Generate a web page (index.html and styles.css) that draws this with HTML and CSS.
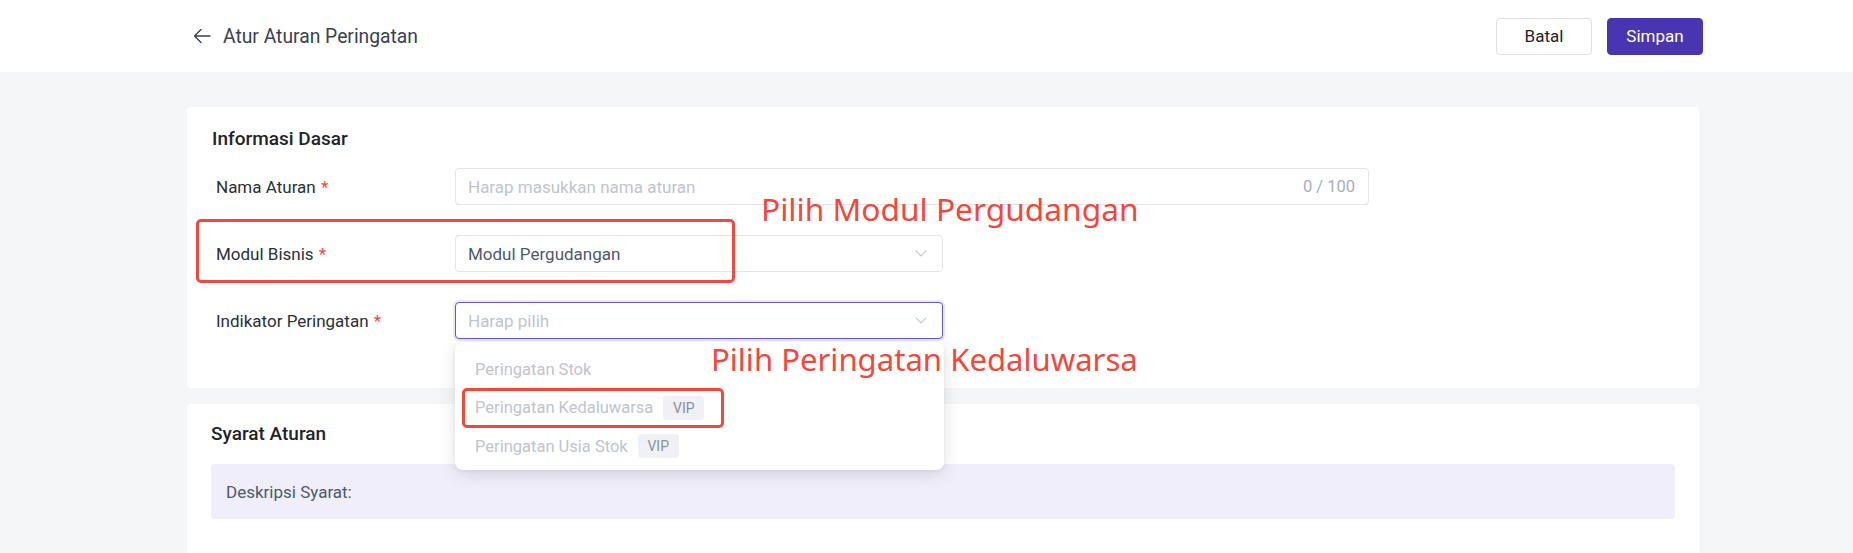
FILE: index.html
```html
<!DOCTYPE html>
<html lang="id">
<head>
<meta charset="utf-8">
<title>Atur Aturan Peringatan</title>
<link rel="stylesheet" href="styles.css">
</head>
<body>
<header class="topbar">
  <div class="topbar-left">
    <svg class="back-icon" width="18" height="18" viewBox="0 0 18 18"><path d="M17 9H1.5M8 2.5L1.5 9L8 15.5" fill="none" stroke="#3a4150" stroke-width="1.4" stroke-linecap="round" stroke-linejoin="round"/></svg>
    <span class="page-title">Atur Aturan Peringatan</span>
  </div>
  <div class="topbar-actions">
    <button class="btn btn-default">Batal</button>
    <button class="btn btn-primary">Simpan</button>
  </div>
</header>

<main class="content">
  <section class="card card-basic">
    <h2 class="card-title">Informasi Dasar</h2>
    <div class="form">
      <div class="form-row">
        <label class="form-label">Nama Aturan <span class="req">*</span></label>
        <div class="input input-wide">
          <span class="placeholder">Harap masukkan nama aturan</span>
          <span class="counter">0 / 100</span>
        </div>
      </div>
      <div class="form-row">
        <label class="form-label">Modul Bisnis <span class="req">*</span></label>
        <div class="input select">
          <span class="value">Modul Pergudangan</span>
          <svg class="chevron" width="12" height="7" viewBox="0 0 12 7"><path d="M0.7 0.7L6 6L11.3 0.7" fill="none" stroke="#c4c7cf" stroke-width="1.1"/></svg>
        </div>
      </div>
      <div class="form-row">
        <label class="form-label">Indikator Peringatan <span class="req">*</span></label>
        <div class="input select select-focus">
          <span class="placeholder">Harap pilih</span>
          <svg class="chevron" width="12" height="7" viewBox="0 0 12 7"><path d="M0.7 0.7L6 6L11.3 0.7" fill="none" stroke="#c4c7cf" stroke-width="1.1"/></svg>
          <ul class="dropdown">
            <li class="option">Peringatan Stok</li>
            <li class="option">Peringatan Kedaluwarsa <span class="vip">VIP</span><span class="mark mark-option"></span></li>
            <li class="option">Peringatan Usia Stok <span class="vip">VIP</span></li>
          </ul>
        </div>
      </div>
    </div>
    <span class="mark mark-module"></span>
    <span class="note note-module">Pilih Modul Pergudangan</span>
    <span class="note note-indicator">Pilih Peringatan Kedaluwarsa</span>
  </section>

  <section class="card card-rules">
    <h2 class="card-title">Syarat Aturan</h2>
    <div class="desc-box">Deskripsi Syarat:</div>
  </section>
</main>
</body>
</html>
```

FILE: styles.css
```css
* { box-sizing: border-box; }
html, body { margin: 0; padding: 0; }
body {
  background: #f5f6f8;
  font-family: Roboto, "Liberation Sans", Arial, sans-serif;
  color: #1f2329;
  height: 553px;
  overflow: hidden;
}

.topbar {
  height: 72px;
  background: #ffffff;
  display: flex;
  align-items: center;
  justify-content: space-between;
  padding: 0 150px 0 193px;
}
.topbar-left { display: flex; align-items: center; gap: 12px; }
.back-icon { display: block; margin-top: -1px; }
.page-title { font-size: 19.3px; color: #3a4150; }
.topbar-actions { display: flex; gap: 15px; }
.btn {
  width: 96px;
  height: 37px;
  border-radius: 4px;
  font-family: inherit;
  font-size: 17px;
  cursor: pointer;
}
.btn-default { background: #fff; border: 1px solid #dfe1e6; color: #1f2329; }
.btn-primary { background: #4a35b1; border: 1px solid #4a35b1; color: #fff; }

.content { padding: 35px 154px 0 187px; }

.card {
  background: #fff;
  border-radius: 4px;
  position: relative;
}
.card-basic { padding: 20px 25px 49px; height: 281px; }
.card-rules { margin-top: 16px; padding: 18px 24px 0 24px; height: 149px; border-radius: 4px 4px 0 0; }
.card-title {
  margin: 0;
  font-size: 19px;
  font-weight: 500;
  line-height: 24px;
  color: #1f2329;
}

.form { margin-top: 17px; display: flex; flex-direction: column; gap: 30px; padding-left: 4px; }
.form-row { display: flex; align-items: center; height: 37px; }
.form-label { width: 239px; font-size: 17px; color: #2b2f36; }
.req { color: #f5463c; margin-left: 1px; }

.input {
  position: relative;
  height: 37px;
  border: 1px solid #e3e5ea;
  border-radius: 4px;
  display: flex;
  align-items: center;
  justify-content: space-between;
  padding: 0 13px 0 12px;
  font-size: 17px;
  background: #fff;
}
.input-wide { width: 914px; }
.select { width: 488px; padding-right: 15px; }
.select-focus {
  border-color: #6556d3;
  box-shadow: 0 0 0 2px rgba(101, 86, 211, 0.14);
}
.placeholder { color: #c0c4cc; }
.value { color: #4e5969; }
.counter { color: #a8adb8; font-size: 16.5px; }
.chevron { display: block; }

.dropdown {
  position: absolute;
  left: -1px;
  top: calc(100% + 4px);
  width: 489px;
  margin: 0;
  padding: 8px 0 4px;
  list-style: none;
  background: #fff;
  border-radius: 8px;
  box-shadow: 0 4px 18px rgba(0, 0, 0, 0.12), 0 1px 4px rgba(0, 0, 0, 0.05);
  z-index: 5;
}
.option {
  position: relative;
  height: 38.5px;
  display: flex;
  align-items: center;
  gap: 10px;
  padding-left: 20px;
  color: #c0c4cc;
  font-size: 16.5px;
}
.vip {
  display: inline-flex;
  align-items: center;
  justify-content: center;
  width: 41px;
  height: 24px;
  border-radius: 4px;
  background: #f0f1f4;
  color: #8a909c;
  font-size: 14px;
}

.mark {
  position: absolute;
  border: 3px solid #f04a3e;
  border-radius: 5px;
  pointer-events: none;
}
.mark-module { left: 9px; top: 112px; width: 539px; height: 64px; z-index: 6; }
.mark-option { left: 7px; top: -1px; width: 262px; height: 40px; }

.note {
  position: absolute;
  font-family: "Noto Sans", "Open Sans", sans-serif;
  font-size: 31.7px;
  line-height: 1;
  color: #f2483c;
  white-space: nowrap;
  z-index: 7;
}
.note-module { left: 574px; top: 86px; }
.note-indicator { left: 524px; top: 237px; font-size: 31.1px; }

.desc-box {
  margin-top: 18px;
  height: 55px;
  background: #f0eefb;
  border-radius: 4px;
  display: flex;
  align-items: center;
  padding: 0 15px;
  font-size: 17px;
  color: #4e5969;
}
```
